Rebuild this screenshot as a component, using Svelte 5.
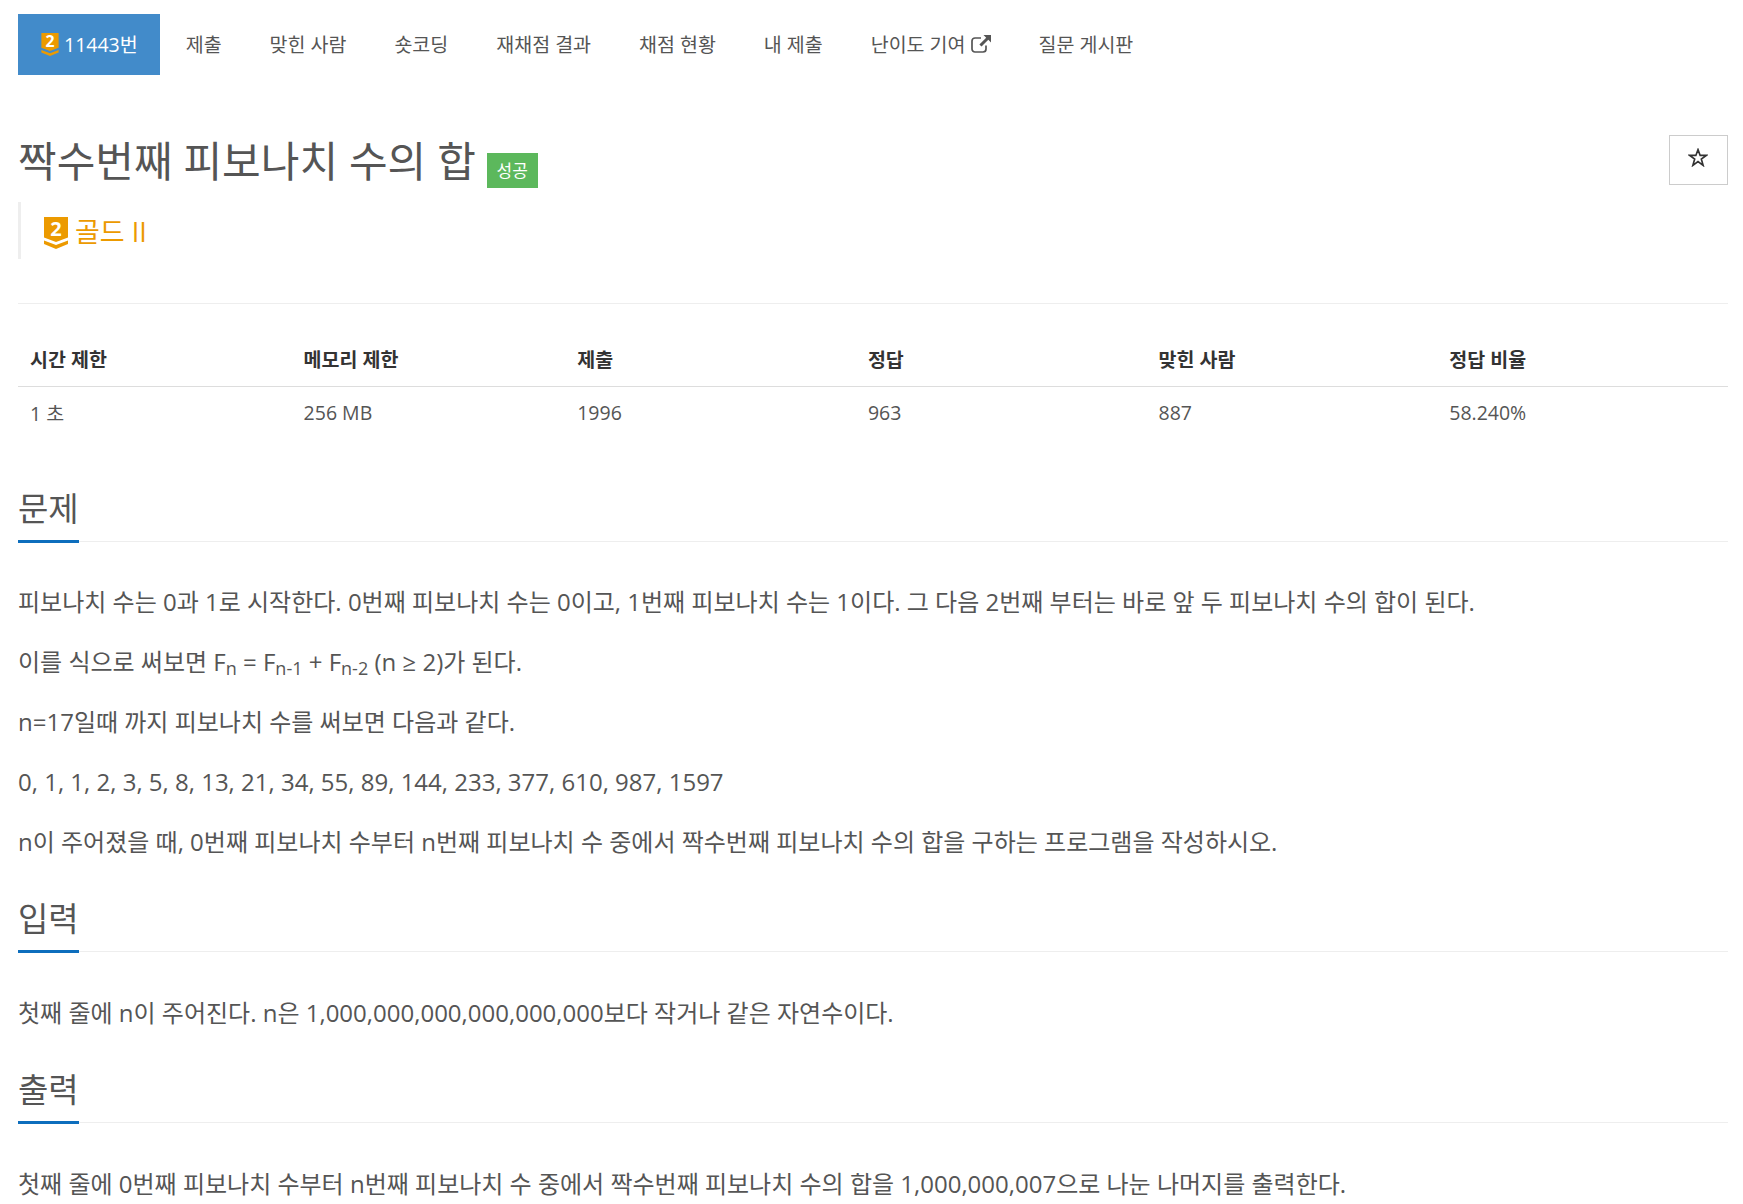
<script>
  const tabs = ['제출', '맞힌 사람', '숏코딩', '재채점 결과', '채점 현황', '내 제출'];
  const heads = ['시간 제한', '메모리 제한', '제출', '정답', '맞힌 사람', '정답 비율'];
  const cells = ['1 초', '256 MB', '1996', '963', '887', '58.240%'];
</script>

{#snippet tier(cls, y)}
  <svg class={cls} viewBox="0 0 24 32" aria-hidden="true">
    <path d="M0 0H24V20.5L12 25L0 20.5Z" fill="#ec9a00" />
    <path d="M0 23.5L12 28L24 23.5V27L12 32L0 27Z" fill="#ec9a00" />
    <text x="12" {y} text-anchor="middle" class="tier-num">2</text>
  </svg>
{/snippet}

<div class="page">
  <nav class="tabs">
    <a class="tab active">{@render tier('tier-small', 20)}<span>11443번</span></a>
    {#each tabs as t}
      <a class="tab">{t}</a>
    {/each}
    <a class="tab">난이도 기여
      <svg class="ext" viewBox="0 0 20 18" aria-hidden="true">
        <path d="M15 10.5V14a3 3 0 0 1-3 3H4a3 3 0 0 1-3-3V6a3 3 0 0 1 3-3h6" fill="none" stroke="#555" stroke-width="1.7" />
        <path d="M12.5 0H20V7.5L17.3 4.8L10.5 11.6L8.4 9.5L15.2 2.7Z" fill="#555" />
      </svg>
    </a>
    <a class="tab">질문 게시판</a>
  </nav>

  <header class="title-row">
    <div class="title-col">
      <h1>짝수번째 피보나치 수의 합 <span class="badge">성공</span></h1>
      <blockquote>{@render tier('tier-big', 19)}<span>골드 II</span></blockquote>
    </div>
    <button class="star" aria-label="즐겨찾기">
      <svg viewBox="0 0 24 23"><path d="M12 2L14.6 9H22L16 13.4L18.2 21L12 16.4L5.8 21L8 13.4L2 9H9.4Z" fill="none" stroke="#333" stroke-width="2" stroke-linejoin="miter" /></svg>
    </button>
  </header>

  <hr />

  <table>
    <thead><tr>{#each heads as h}<th>{h}</th>{/each}</tr></thead>
    <tbody><tr>{#each cells as c}<td>{c}</td>{/each}</tr></tbody>
  </table>

  <section class="first">
    <h2><span>문제</span></h2>
    <p>피보나치 수는 0과 1로 시작한다. 0번째 피보나치 수는 0이고, 1번째 피보나치 수는 1이다. 그 다음 2번째 부터는 바로 앞 두 피보나치 수의 합이 된다.</p>
    <p>이를 식으로 써보면 F<sub>n</sub> = F<sub>n-1</sub> + F<sub>n-2</sub> (n ≥ 2)가 된다.</p>
    <p>n=17일때 까지 피보나치 수를 써보면 다음과 같다.</p>
    <p>0, 1, 1, 2, 3, 5, 8, 13, 21, 34, 55, 89, 144, 233, 377, 610, 987, 1597</p>
    <p>n이 주어졌을 때, 0번째 피보나치 수부터 n번째 피보나치 수 중에서 짝수번째 피보나치 수의 합을 구하는 프로그램을 작성하시오.</p>
  </section>

  <section>
    <h2><span>입력</span></h2>
    <p>첫째 줄에 n이 주어진다. n은 1,000,000,000,000,000,000보다 작거나 같은 자연수이다.</p>
  </section>

  <section>
    <h2><span>출력</span></h2>
    <p>첫째 줄에 0번째 피보나치 수부터 n번째 피보나치 수 중에서 짝수번째 피보나치 수의 합을 1,000,000,007으로 나눈 나머지를 출력한다.</p>
  </section>
</div>

<style>
  :global(body) {
    margin: 0;
    background: #fff;
    color: #555;
    font-family: "Open Sans", "Noto Sans CJK KR", sans-serif;
    font-size: 19.5px;
  }
  .page {
    padding: 14px 15px 0 18px;
    height: 1190px;
    overflow: hidden;
  }
  .tabs {
    display: flex;
    height: 61px;
    align-items: stretch;
  }
  .tab {
    display: flex;
    align-items: center;
    gap: 5px;
    padding: 0 24px 2px;
    color: #555;
    font-size: 19.5px;
    white-space: nowrap;
  }
  .tab.active {
    background: #428bca;
    color: #fff;
    gap: 5px;
    font-size: 19.5px;
    padding: 0 22px 2px 23px;
    margin-right: 2px;
  }
  .tier-small { width: 18px; height: 23px; margin-top: 2px; overflow: visible; }
  .tier-big { width: 24px; height: 32px; margin-top: 5px; overflow: visible; }
  .tier-num {
    fill: #fff;
    font-family: "Open Sans", sans-serif;
    font-weight: 700;
    font-size: 20px;
  }
  .tier-small .tier-num { font-size: 22px; }
  .ext { width: 20px; height: 18px; }
  .title-row {
    display: flex;
    justify-content: space-between;
    align-items: flex-start;
    margin-top: 60px;
  }
  h1 {
    margin: 0;
    padding-top: 1px;
    font-size: 42px;
    font-weight: 400;
    line-height: 50px;
    color: #555;
  }
  .badge {
    display: inline-block;
    background: #5cb85c;
    color: #fff;
    font-size: 17px;
    width: 51px;
    height: 35px;
    line-height: 35px;
    text-align: center;
    vertical-align: 0;
  }
  blockquote {
    display: flex;
    align-items: center;
    gap: 7px;
    margin: 14px 0 0;
    height: 57px;
    border-left: 3px solid #eee;
    padding-left: 23px;
    font-size: 27px;
    color: #ec9a00;
  }
  .star {
    width: 59px;
    height: 50px;
    padding: 0 1px 5px 0;
    background: #fff;
    border: 1px solid #ccc;
    display: flex;
    align-items: center;
    justify-content: center;
  }
  .star svg { width: 20px; height: 19px; }
  hr {
    border: 0;
    border-top: 1px solid #eee;
    margin: 44px 0 0;
  }
  table {
    width: 100%;
    border-collapse: collapse;
    table-layout: fixed;
    margin-top: 27px;
    color: #333;
  }
  th {
    box-sizing: border-box;
    width: 17%;
    text-align: left;
    font-weight: 700;
    padding: 0 12px;
    height: 55px;
    font-size: 19.5px;
    border-bottom: 1px solid #ddd;
    color: #333;
  }
  th:nth-child(1), th:nth-child(2) { width: 16%; }
  td {
    padding: 0 12px;
    height: 52px;
    color: #555;
  }
  section { margin-top: 32px; }
  section.first { margin-top: 45px; }
  h2 {
    margin: 0 0 41px;
    height: 57px;
    font-size: 33px;
    line-height: 50px;
    font-weight: 400;
    color: #555;
    border-bottom: 1px solid #eee;
  }
  .first h2 { margin-bottom: 40px; }
  h2 span {
    display: inline-block;
    height: 56px;
    border-bottom: 3px solid #0d6ebd;
  }
  p {
    margin: 0 0 20px;
    font-size: 24px;
    line-height: 40px;
    color: #555;
  }
  sub {
    font-size: 75%;
    line-height: 0;
    vertical-align: baseline;
    position: relative;
    bottom: -0.25em;
  }
</style>
